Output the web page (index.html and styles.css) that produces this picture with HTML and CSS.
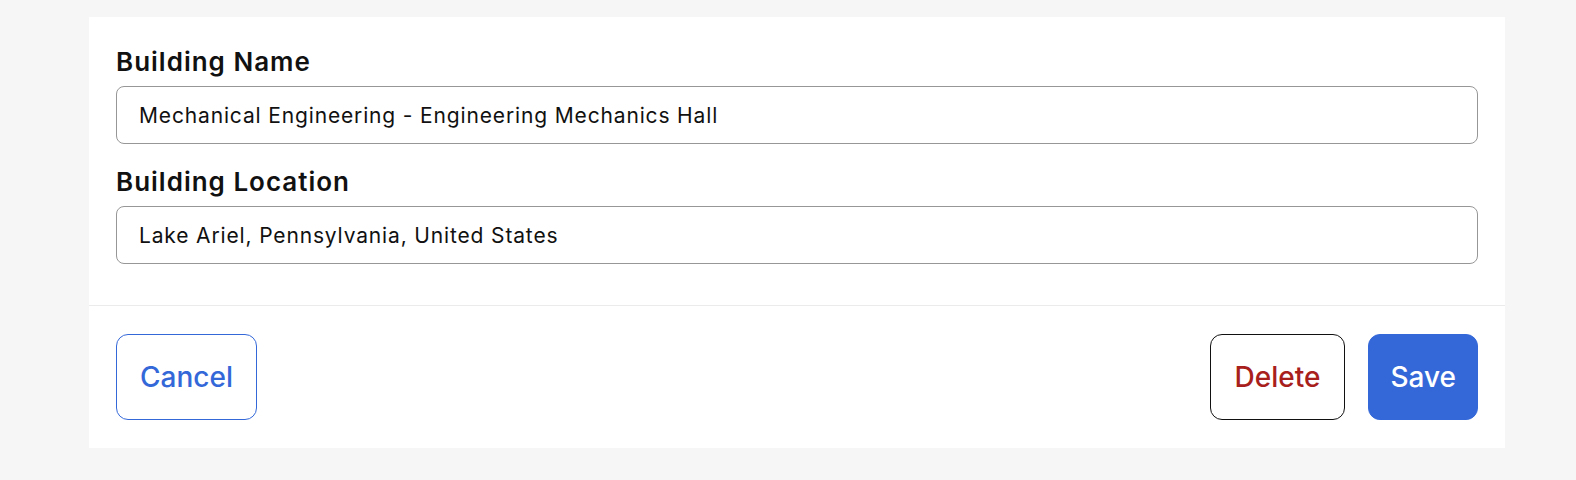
FILE: index.html
```html
<!DOCTYPE html>
<html lang="en">
<head>
<meta charset="utf-8">
<title>Edit Building</title>
<link rel="stylesheet" href="styles.css">
</head>
<body>
<div class="card">
  <div class="fields">
    <div class="field">
      <label class="label" for="name">Building Name</label>
      <input class="input" id="name" type="text" value="Mechanical Engineering - Engineering Mechanics Hall">
    </div>
    <div class="field">
      <label class="label" for="loc">Building Location</label>
      <input class="input" id="loc" type="text" value="Lake Ariel, Pennsylvania, United States">
    </div>
  </div>
  <div class="footer">
    <button class="btn btn-cancel" type="button">Cancel</button>
    <div class="actions">
      <button class="btn btn-delete" type="button">Delete</button>
      <button class="btn btn-save" type="button">Save</button>
    </div>
  </div>
</div>
</body>
</html>
```

FILE: styles.css
```css
* { box-sizing: border-box; }
html, body { margin: 0; padding: 0; }
body {
  background: #f6f6f6;
  font-family: Inter, "Liberation Sans", sans-serif;
  color: #111;
  padding: 17px 71px 0 89px;
  height: 480px;
}
.card {
  background: #fff;
  width: 1416px;
}
.fields {
  display: flex;
  flex-direction: column;
  gap: 22px;
  padding: 29px 27px 41px;
  border-bottom: 1px solid #ebebeb;
}
.field {
  display: flex;
  flex-direction: column;
  gap: 8px;
}
.label {
  font-size: 26px;
  line-height: 32px;
  font-weight: 600;
  color: #111;
  letter-spacing: 1px;
}
.input {
  height: 58px;
  border: 1px solid #979797;
  border-radius: 8px;
  padding: 0 22px;
  font-family: inherit;
  font-size: 21px;
  letter-spacing: 0.85px;
  color: #111;
  background: #fff;
  outline: none;
}
.footer {
  display: flex;
  justify-content: space-between;
  align-items: center;
  padding: 28px 27px 28px;
}
.actions {
  display: flex;
  gap: 23px;
}
.btn {
  height: 86px;
  padding: 0 23px;
  border-radius: 12px;
  font-family: inherit;
  font-size: 28px;
  font-weight: 500;
  background: #fff;
  cursor: pointer;
}
.btn-cancel {
  border: 1px solid #3468d9;
  color: #3468d9;
}
.btn-delete {
  border: 1px solid #111;
  color: #a8201c;
  padding: 0 24px;
}
.btn-save {
  border: 1px solid #3468d9;
  background: #3468d9;
  color: #fff;
  padding: 0 21px;
}
```
